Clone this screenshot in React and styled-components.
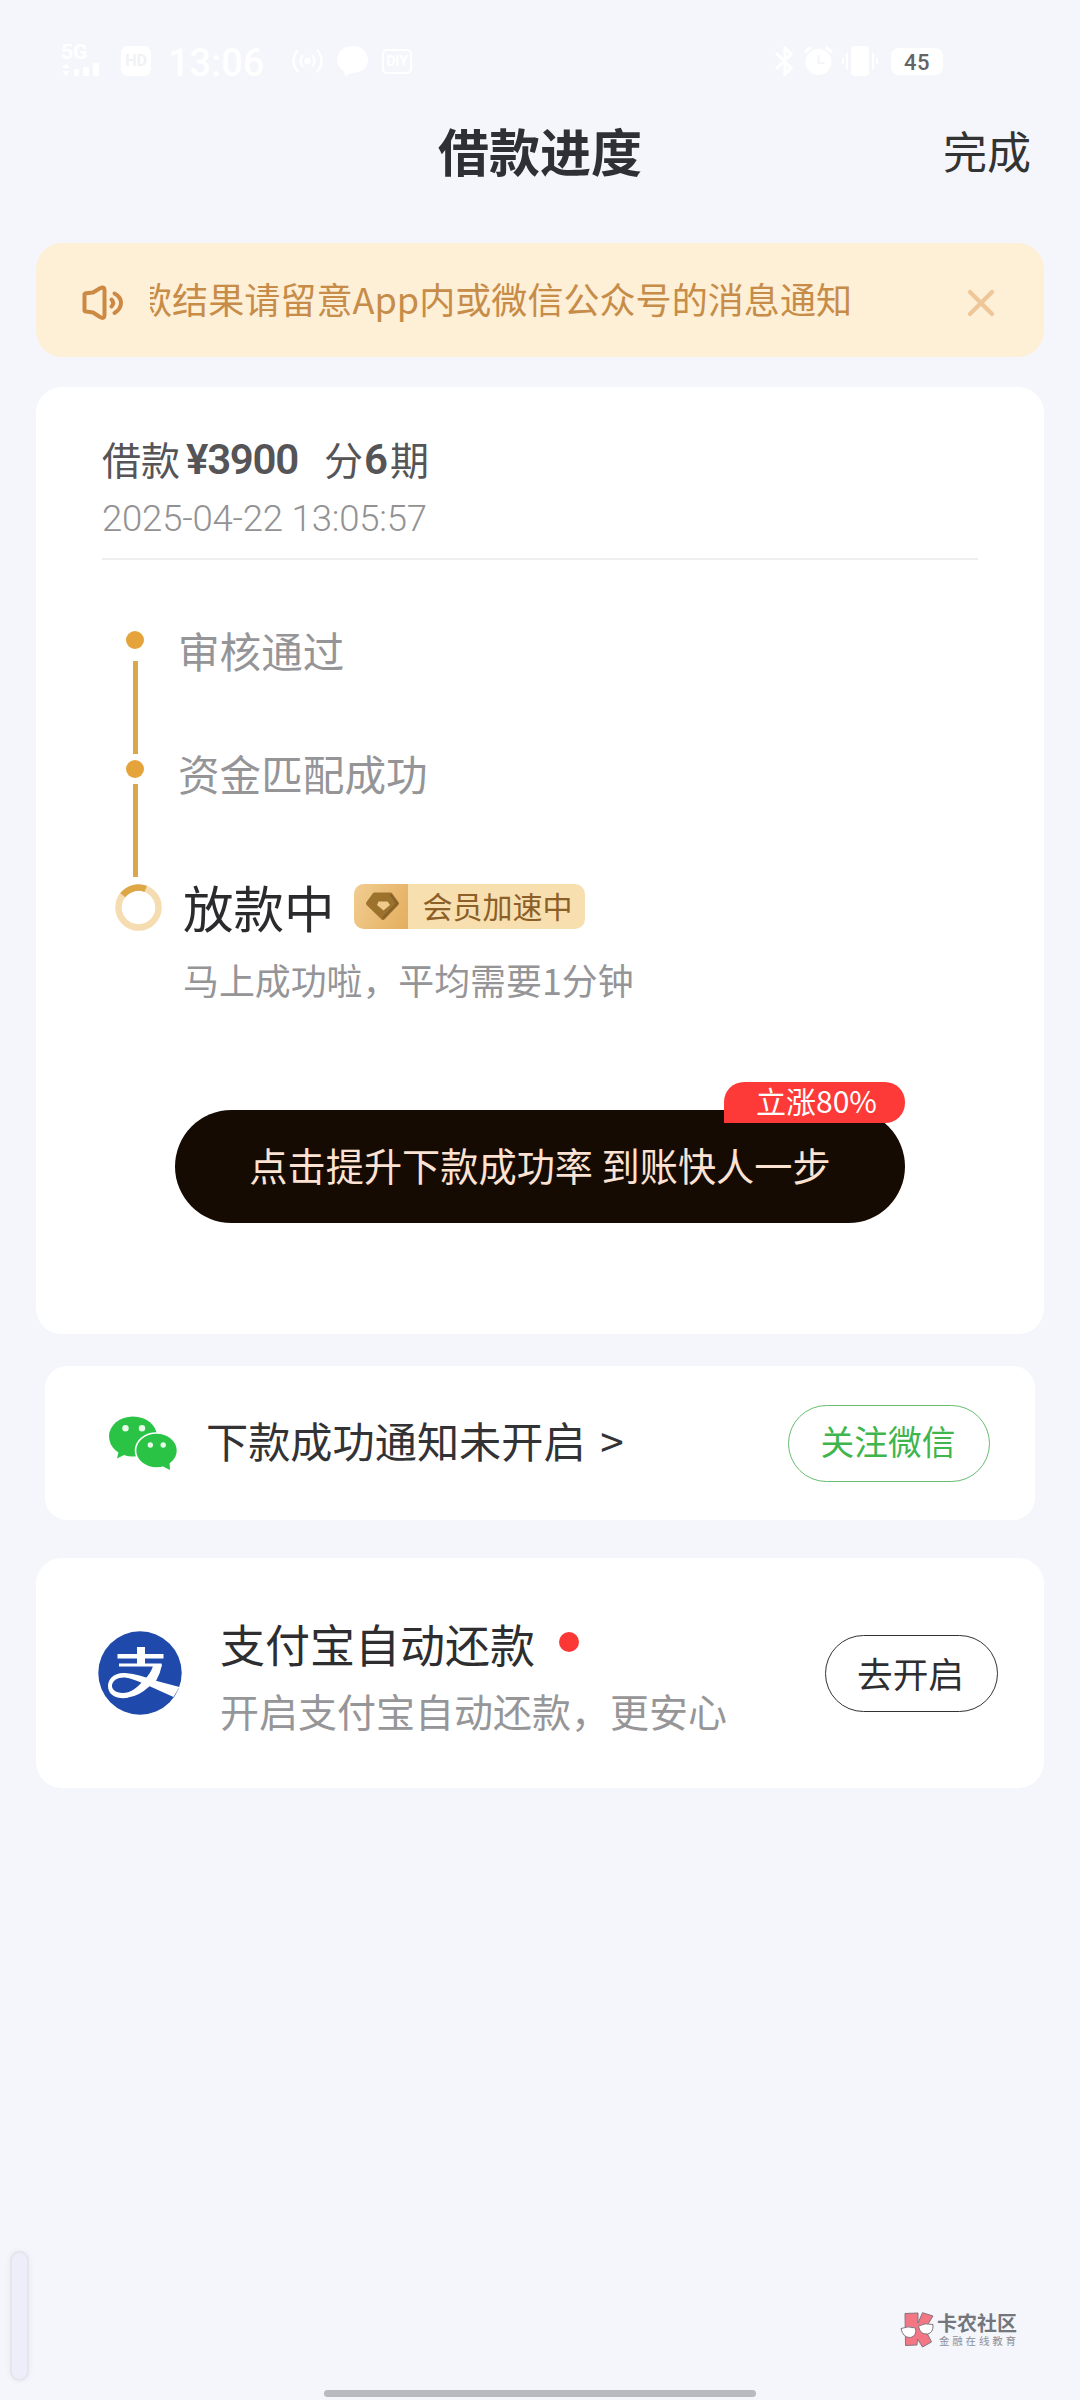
import styled, { createGlobalStyle } from "styled-components";

export default function App() {
  return (
    <>
      <GlobalStyle />
      <Page lang="zh-CN">
        <StatusBar />

        <Header>
          <Title>借款进度</Title>
          <DoneButton>完成</DoneButton>
        </Header>

        <Notice>
          <SpeakerIcon />
          <NoticeClip>
            <NoticeText>款结果请留意App内或微信公众号的消息通知</NoticeText>
          </NoticeClip>
          <CloseIcon />
        </Notice>

        <LoanCard>
          <LoanHead>
            <LoanSummary>
              借款<Amount>¥3900</Amount>分<Periods>6</Periods>期
            </LoanSummary>
            <LoanDate>2025-04-22 13:05:57</LoanDate>
          </LoanHead>

          <Timeline>
            <Rail>
              <Dot />
              <RailLine $top={12} $bottom={6} />
              <Dot />
              <RailLine $top={6} $bottom={7} />
              <Spinner />
            </Rail>
            <Steps>
              <Step>审核通过</Step>
              <Step>资金匹配成功</Step>
              <CurrentStep>
                放款中
                <MemberTag>
                  <TagIcon>
                    <GemIcon />
                  </TagIcon>
                  <TagText>会员加速中</TagText>
                </MemberTag>
              </CurrentStep>
              <StepHint>马上成功啦，平均需要1分钟</StepHint>
            </Steps>
          </Timeline>

          <BoostButton>
            点击提升下款成功率 到账快人一步
            <BoostBadge>立涨80%</BoostBadge>
          </BoostButton>
        </LoanCard>

        <WechatCard>
          <WechatIcon />
          <WechatText>
            下款成功通知未开启 <Arrow>&gt;</Arrow>
          </WechatText>
          <PillButton $color="#3fb54d" $border="#67bd70" $width={202} $size={33.7}>
            关注微信
          </PillButton>
        </WechatCard>

        <AlipayCard>
          <AlipayIcon />
          <AlipayInfo>
            <AlipayTitle>
              支付宝自动还款
              <RedDot />
            </AlipayTitle>
            <AlipayHint>开启支付宝自动还款，更安心</AlipayHint>
          </AlipayInfo>
          <PillButton $color="#2e2e30" $border="#333335" $width={173} $size={35.7} $low>
            去开启
          </PillButton>
        </AlipayCard>

        <SideHandle />
        <Watermark>
          <WatermarkLogo />
          <div>
            <WatermarkName>卡农社区</WatermarkName>
            <WatermarkSlogan>金融在线教育</WatermarkSlogan>
          </div>
        </Watermark>
        <HomeBar />
      </Page>
    </>
  );
}

function StatusBar() {
  return (
    <StatusRow>
      <Signal>
        <SignalType>5G</SignalType>
        <svg width="38" height="15" viewBox="0 0 38 15" fill="#fff">
          <path d="M1 5l4-4 4 4zM1 8h8l-4 5z" />
          <rect x="13" y="6" width="5" height="7" rx="1" />
          <rect x="22" y="4" width="6" height="9" rx="1" />
          <rect x="32" y="0" width="6" height="13" rx="1" />
        </svg>
      </Signal>
      <HdBox>HD</HdBox>
      <Clock>13:06</Clock>
      <svg width="31" height="24" viewBox="0 0 31 24" fill="none" stroke="#fff" strokeWidth="2.400">
        <path d="M6 1q-9 11 0 22M11 6q-5 6 0 12M25 1q9 11 0 22M20 6q5 6 0 12" />
        <circle cx="15.500" cy="12" r="2" fill="#fff" />
      </svg>
      <ChatIcon width="31" height="30" viewBox="0 0 31 30" fill="#fff">
        <path d="M15.500 0C24 0 31 6 31 14s-7 13-15 13q-3 0-8 3l-1-5q-7-4-7-11C0 6 7 0 15.500 0z" />
      </ChatIcon>
      <DiyBox>DIY</DiyBox>
      <StatusSpacer />
      <svg width="20" height="30" viewBox="0 0 20 30" fill="none" stroke="#fff" strokeWidth="3">
        <path d="M1 7l15 15-6 6V2l6 6L1 23" />
      </svg>
      <AlarmIcon width="29" height="30" viewBox="0 0 29 30">
        <circle cx="14.500" cy="16" r="13" fill="#fff" />
        <path d="M1 6l6-5M28 6l-6-5" stroke="#fff" strokeWidth="3" />
        <path d="M14.500 9v8h6" fill="none" stroke="#f4f5f8" strokeWidth="2" />
      </AlarmIcon>
      <VibrateIcon width="36" height="30" viewBox="0 0 36 30" fill="#fff">
        <rect x="9" y="0" width="18" height="30" rx="4" />
        <path d="M4 7h2v16H4zM0 12h2v6H0zM30 7h2v16h-2zM34 12h2v6h-2z" />
      </VibrateIcon>
      <Battery>45</Battery>
    </StatusRow>
  );
}

function SpeakerIcon() {
  return (
    <NoticeIcon
      width="42"
      height="36"
      viewBox="0 0 42 36"
      fill="none"
      stroke="#cc8944"
      strokeWidth="4"
      strokeLinecap="round"
      strokeLinejoin="round"
    >
      <path d="M2.500 9.500Q2.500 8.500 4 8.200L11 7.500 18 3.200Q22.500 1 22.500 5V30Q22.500 34.500 18 32L11 27.500 4 26.600Q2.500 26.400 2.500 25z" />
      <path d="M32.500 8.500Q39 12 39 18T32.500 28" />
      <path d="M29.500 14.500Q33 18 29.500 21.500" />
    </NoticeIcon>
  );
}

function CloseIcon() {
  return (
    <NoticeIcon
      width="28"
      height="28"
      viewBox="0 0 28 28"
      stroke="#efc698"
      strokeWidth="4.200"
      strokeLinecap="round"
    >
      <path d="M3 3l22 22M25 3L3 25" />
    </NoticeIcon>
  );
}

function Spinner() {
  return (
    <svg width="47" height="47" viewBox="0 0 47 47" fill="none" strokeWidth="6.500">
      <circle cx="23.500" cy="23.500" r="20" stroke="#f5dcb1" />
      <path d="M7.800 11.200A20 20 0 0 1 30.700 4.900" stroke="#dea746" />
    </svg>
  );
}

function GemIcon() {
  return (
    <svg width="35" height="29" viewBox="0 0 35 29">
      <path
        d="M9.500 2.500H25.500L32 11.500 18 26 3 11.500z"
        fill="#9c722c"
        stroke="#9c722c"
        strokeWidth="4"
        strokeLinejoin="round"
      />
      <path d="M13.500 9.500H22.500L25 13 18.500 18.500 12 13z" fill="#efca8c" />
      <path d="M25.500 2.500L32 11.500 18 26" fill="none" stroke="#86602a" strokeWidth="2" />
    </svg>
  );
}

function WechatIcon() {
  return (
    <svg width="68" height="55" viewBox="0 0 68 55" fill="#2ac345">
      <ellipse cx="24" cy="20.500" rx="24" ry="20" />
      <path d="M10 34L8 42.500 17 38z" />
      <ellipse cx="47.500" cy="34.500" rx="21" ry="17.500" stroke="#fff" strokeWidth="1.600" />
      <path d="M60.500 46L61 54 54 50.500z" />
      <g fill="#e9fbe9">
        <circle cx="16.500" cy="12.300" r="3.200" />
        <circle cx="33" cy="12.300" r="3.200" />
        <circle cx="41.300" cy="29" r="2.700" />
        <circle cx="54.200" cy="29" r="2.700" />
      </g>
    </svg>
  );
}

function AlipayIcon() {
  return (
    <svg width="84" height="84" viewBox="0 0 84 84">
      <circle cx="42" cy="42" r="41.700" fill="#1f4aab" />
      <g fill="#fff">
        <path d="M39 16h8v18h-8zM19.500 23h46v4.500h-46zM21 32.500h42.500v3H21z" />
        <path d="M55 49L81.500 56 75.500 66 50 54.500z" />
      </g>
      <path
        d="M57 49.500C47 46 38 43 27 42C15 41.500 10 49 10 55C10 64 18 68 29 67L30 66.500Q41 65 50 56.500L58 50Q62.500 42 64 33.500L55.500 33.500Q53 43 45 50C38 58 32 62 25 62C17 62 13.500 58 14 54C15 49 20 46 27 46.500Q34 47 51 55z"
        fill="#fff"
      />
    </svg>
  );
}

function WatermarkLogo() {
  return (
    <svg width="35" height="37" viewBox="0 0 35 37" stroke="#84757f" strokeWidth="1">
      <path
        d="M5 1.500L18 1 18 11 22.500 0.700 33 4 25 17 31.500 30 22.500 35 17.500 27 17 33 5.500 33.500z"
        fill="#f27683"
      />
      <path d="M1 16.500Q8 13.500 15.500 16Q17 24 10.500 25.500Q3 26 1 16.500z" fill="#fff" />
      <path d="M18.500 14Q25 10.500 33 12.500Q33.500 21 27.500 22Q20 23 18.500 14z" fill="#fff" />
    </svg>
  );
}

const GlobalStyle = createGlobalStyle`
  * {
    box-sizing: border-box;
  }

  body {
    margin: 0;
    background: #f4f6fb;
    font-family: "Noto Sans CJK SC", "Noto Sans", sans-serif;
  }

  svg {
    display: block;
    flex-shrink: 0;
  }

  button {
    padding: 0;
    border: none;
    background: none;
    font-family: inherit;
  }
`;

const Page = styled.div`
  position: relative;
  display: flex;
  flex-direction: column;
  width: 1080px;
  height: 2400px;
  overflow: hidden;
  background: #f4f6fb;
`;

const StatusRow = styled.div`
  display: flex;
  align-items: center;
  height: 82px;
  padding: 40px 137px 0 61px;
  color: #fff;
  font-family: Roboto, sans-serif;
`;

const Signal = styled.div`
  display: flex;
  flex-direction: column;
  gap: 2px;
  width: 60px;
`;

const SignalType = styled.span`
  font-size: 21px;
  font-weight: 700;
  line-height: 17px;
`;

const HdBox = styled.div`
  width: 30px;
  height: 30px;
  border-radius: 7px;
  background: #fff;
  color: #f1f2f5;
  font-size: 16px;
  font-weight: 700;
  line-height: 30px;
  text-align: center;
`;

const Clock = styled.div`
  width: 141px;
  padding: 4px 0 0 17px;
  font-size: 38px;
  font-weight: 500;
  line-height: 40px;
`;

const ChatIcon = styled.svg`
  margin: 0 14px;
`;

const DiyBox = styled.div`
  width: 30px;
  height: 25px;
  border: 2px solid #fff;
  border-radius: 5px;
  font-size: 14px;
  font-weight: 700;
  line-height: 21px;
  text-align: center;
`;

const StatusSpacer = styled.div`
  flex: 1;
`;

const AlarmIcon = styled.svg`
  margin-left: 9px;
`;

const VibrateIcon = styled.svg`
  margin: 0 13px 0 9px;
`;

const Battery = styled.div`
  width: 52px;
  height: 27px;
  border-radius: 8px;
  background: #fff;
  color: #646466;
  font-size: 22px;
  font-weight: 500;
  letter-spacing: 0.5px;
  line-height: 29px;
  text-align: center;
`;

const Header = styled.header`
  display: grid;
  grid-template-columns: 1fr auto 1fr;
  align-items: center;
  height: 134px;
  margin-bottom: 27px;
  padding: 2px 49px 0;
`;

const Title = styled.h1`
  grid-column: 2;
  margin: 0;
  color: #2f2f36;
  font-size: 51px;
  font-weight: 700;
  line-height: 60px;
`;

const DoneButton = styled.button`
  justify-self: end;
  color: #333;
  font-size: 44px;
  line-height: 60px;
`;

const Notice = styled.div`
  display: flex;
  align-items: center;
  flex-shrink: 0;
  height: 114px;
  margin: 0 36px 30px;
  padding: 0 49px 0 46px;
  border-radius: 26px;
  background: #feefd7;
`;

const NoticeIcon = styled.svg`
  margin-top: 6px;
`;

const NoticeClip = styled.div`
  flex: 1;
  height: 50px;
  margin: 0 24px 4px 26px;
  overflow: hidden;
`;

const NoticeText = styled.div`
  margin-left: -14px;
  color: #c68c48;
  font-size: 36.1px;
  line-height: 50px;
  white-space: nowrap;
`;

const Card = styled.section`
  flex-shrink: 0;
  margin: 0 36px;
  border-radius: 26px;
  background: #fff;
`;

const LoanCard = styled(Card)`
  display: flex;
  flex-direction: column;
  height: 947px;
  padding: 49px 66px 0;
`;

const LoanHead = styled.div`
  height: 124px;
  border-bottom: 2px solid #eeeff0;
`;

const LoanSummary = styled.div`
  display: flex;
  align-items: center;
  height: 44px;
  color: #555557;
  font-size: 39px;
  line-height: 44px;
`;

const Amount = styled.span`
  width: 144px;
  padding: 4px 0 0 6px;
  font-family: Roboto, sans-serif;
  font-size: 42px;
  font-weight: 600;
  letter-spacing: -1.3px;
`;

const Periods = styled(Amount)`
  width: 27px;
  padding-left: 1px;
`;

const LoanDate = styled.div`
  height: 36px;
  margin-top: 21px;
  color: #929294;
  font-family: Roboto, sans-serif;
  font-size: 36.5px;
  font-weight: 300;
  letter-spacing: -0.2px;
  line-height: 36px;
`;

const Timeline = styled.div`
  display: flex;
  height: 550px;
  padding-left: 13px;
`;

const Rail = styled.div`
  width: 63px;
  padding-top: 71px;
`;

const Dot = styled.div`
  width: 18px;
  height: 18px;
  margin-left: 11px;
  border-radius: 50%;
  background: #e5a43b;
`;

const RailLine = styled.div`
  width: 5px;
  height: 93px;
  margin: ${(props) => props.$top}px 0 ${(props) => props.$bottom}px 17.5px;
  background: #d9a84c;
`;

const Steps = styled.div`
  padding-top: 65px;
`;

const Step = styled.div`
  height: 50px;
  margin-bottom: 73px;
  color: #959598;
  font-size: 41.6px;
  line-height: 50px;
`;

const CurrentStep = styled.div`
  display: flex;
  align-items: center;
  height: 50px;
  margin-top: 83px;
  padding-left: 5px;
  color: #2b2b2e;
  font-size: 50.5px;
  line-height: 50px;
`;

const MemberTag = styled.span`
  display: flex;
  width: 231px;
  height: 45px;
  margin-left: 19px;
  overflow: hidden;
  border-radius: 10px;
  background: #f7dfaf;
`;

const TagIcon = styled.span`
  display: flex;
  align-items: center;
  justify-content: center;
  width: 54px;
  padding-left: 3px;
  background: linear-gradient(115deg, #f1cd92, #e4ae5d);
`;

const TagText = styled.span`
  padding-left: 15px;
  color: #8c5f28;
  font-size: 30px;
  line-height: 42px;
`;

const StepHint = styled.div`
  margin-top: 28px;
  padding-left: 5px;
  color: #959598;
  font-size: 35.9px;
  line-height: 40px;
`;

const BoostButton = styled.button`
  position: relative;
  align-self: center;
  flex-shrink: 0;
  width: 730px;
  height: 113px;
  padding-bottom: 4px;
  border-radius: 57px;
  background: #150b02;
  color: #fce2d2;
  font-size: 38.2px;
  font-weight: 400;
  white-space: pre;
`;

const BoostBadge = styled.span`
  position: absolute;
  top: -28px;
  right: 0;
  width: 181px;
  height: 41px;
  border-radius: 20px 20px 20px 0;
  background: #fe3a38;
  color: #fff;
  font-size: 30px;
  line-height: 36px;
  text-indent: 4px;
`;

const WechatCard = styled(Card)`
  display: flex;
  align-items: center;
  height: 154px;
  margin: 32px 45px 38px;
  padding: 0 45px 0 64px;
  border-radius: 22px;
`;

const WechatText = styled.div`
  flex: 1;
  margin: 0 0 6px 29px;
  color: #333335;
  font-size: 42.2px;
  line-height: 50px;
  white-space: pre;
`;

const Arrow = styled.span`
  margin-left: 5px;
`;

const PillButton = styled.button`
  width: ${(props) => props.$width}px;
  height: 77px;
  padding: 0 2px ${(props) => (props.$low ? 0 : 4)}px 0;
  border: 1.5px solid ${(props) => props.$border};
  border-radius: 39px;
  color: ${(props) => props.$color};
  font-size: ${(props) => props.$size}px;
  line-height: 1.4;
`;

const AlipayCard = styled(Card)`
  display: flex;
  align-items: center;
  height: 230px;
  padding: 0 46px 0 62px;
`;

const AlipayInfo = styled.div`
  flex: 1;
  margin: 5px 0 0 38px;
`;

const AlipayTitle = styled.div`
  display: flex;
  align-items: center;
  color: #2e2e30;
  font-size: 45px;
  line-height: 50px;
`;

const RedDot = styled.span`
  width: 20px;
  height: 20px;
  margin: 0 0 5px 24px;
  border-radius: 50%;
  background: #fb3835;
`;

const AlipayHint = styled.div`
  margin-top: 19px;
  color: #969698;
  font-size: 39px;
  line-height: 44px;
`;

const SideHandle = styled.div`
  position: absolute;
  top: 2251px;
  left: 10px;
  width: 19px;
  height: 130px;
  border: 2px solid #e5e5eb;
  border-radius: 10px;
  background: #eeeefa;
  box-shadow: 0 0 6px rgba(0, 0, 0, 0.06);
`;

const Watermark = styled.div`
  position: absolute;
  top: 2312px;
  left: 900px;
  display: flex;
  gap: 2px;
  white-space: nowrap;
`;

const WatermarkName = styled.div`
  color: #75767c;
  font-size: 20px;
  font-weight: 700;
  line-height: 22px;
`;

const WatermarkSlogan = styled.div`
  padding-left: 2px;
  color: #8f9096;
  font-size: 10.5px;
  letter-spacing: 2.8px;
  line-height: 13px;
`;

const HomeBar = styled.div`
  position: absolute;
  bottom: 3px;
  left: 324px;
  width: 432px;
  height: 7px;
  border-radius: 4px;
  background: #b9babf;
`;
